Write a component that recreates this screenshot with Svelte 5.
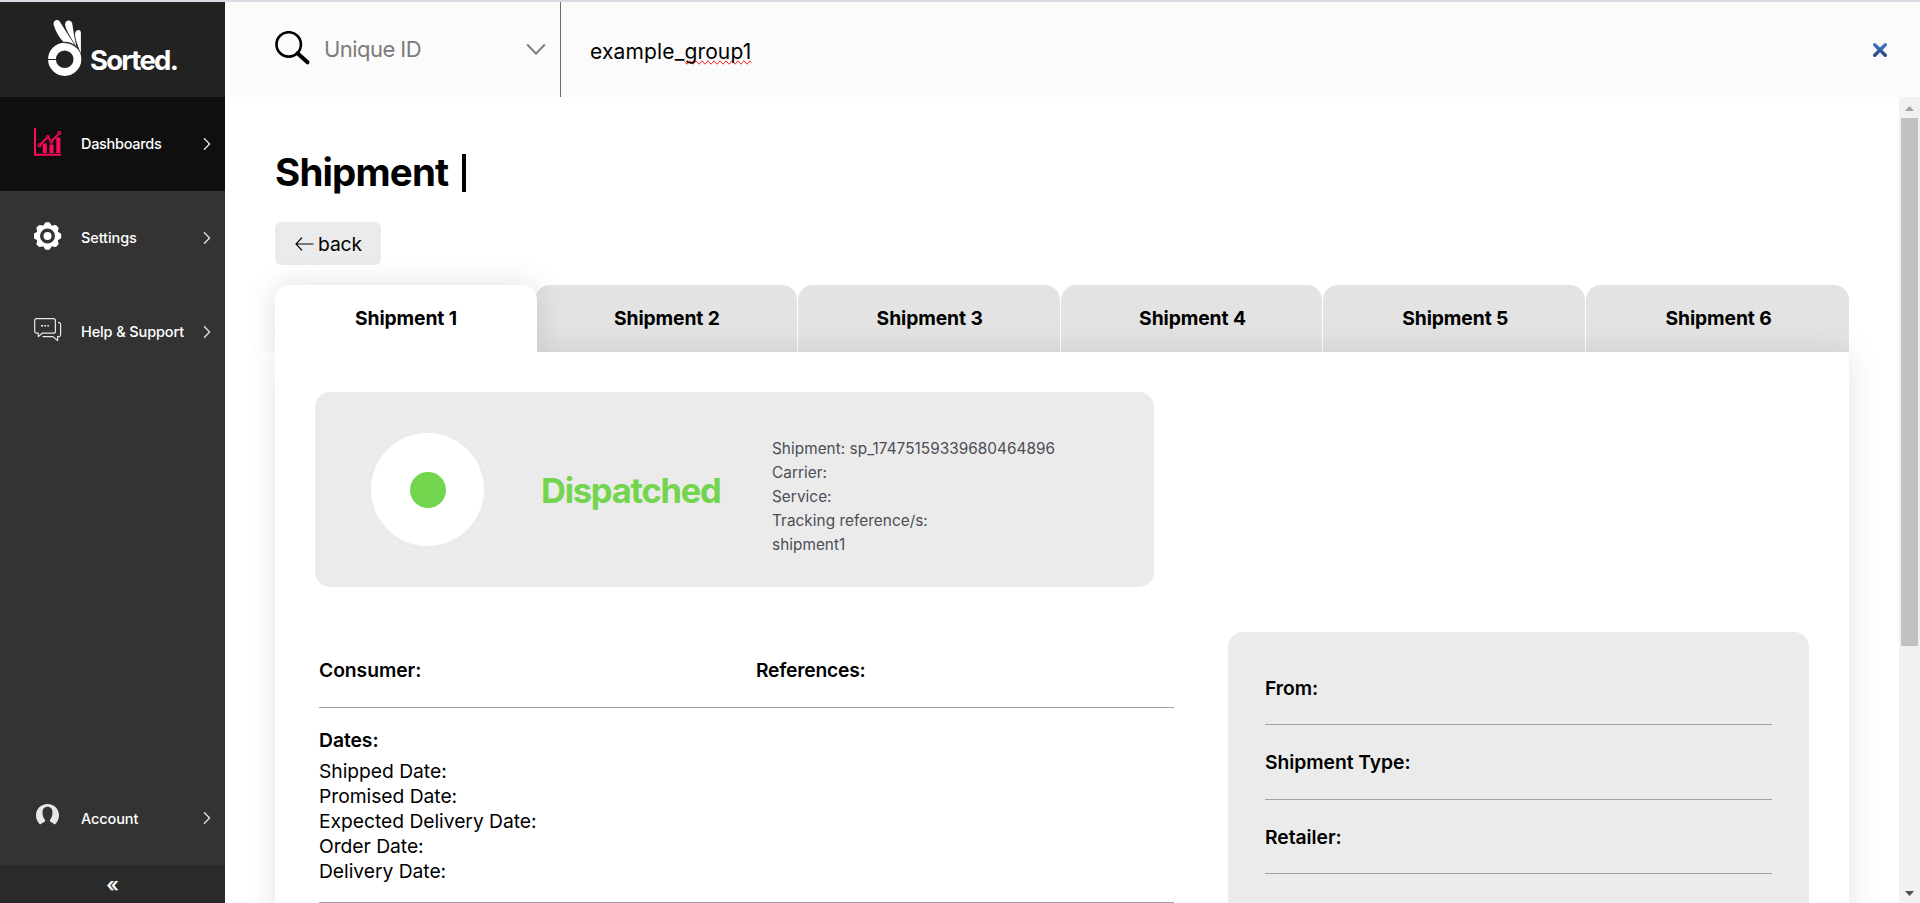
<script>
  const tabs = [1, 2, 3, 4, 5, 6];
  const info = ['Shipment: sp_17475159339680464896', 'Carrier:', 'Service:', 'Tracking reference/s:', 'shipment1'];
  const dates = ['Shipped Date:', 'Promised Date:', 'Expected Delivery Date:', 'Order Date:', 'Delivery Date:'];
  const details = ['From:', 'Shipment Type:', 'Retailer:'];
</script>

{#snippet chevron()}
  <svg class="chevron" width="8" height="14" viewBox="0 0 8 14"><path d="M1 1.2 6.6 7 1 12.8" fill="none" stroke="#e4e4e4" stroke-width="1.300" /></svg>
{/snippet}

<div class="app">
  <aside>
    <div class="logo">
      <svg width="36" height="60" viewBox="0 0 36 60">
        <g fill="#fff">
          <path d="M6.900 6.500C5 1.500 10.900-.700 13 2.900L27.500 25.800C24.500 23.600 20 22.300 16.300 22.800 12 18.500 9 13 6.900 6.500Z" />
          <path d="M18.200 6.500C17 1.200 23.700-.300 25.200 4.300L27.300 17.500 29.500 28C26 21.500 20 13.500 18.200 6.500Z" />
          <path d="M28 14.500C28.800 10.300 33.500 10 33.900 13.500V34.500C32 29 27.800 20.500 28 14.500Z" />
        </g>
        <circle cx="17.700" cy="40.300" r="12.700" fill="none" stroke="#fff" stroke-width="7.800" />
        <path d="M1 40.500H9" stroke="#222" stroke-width="1" />
        <path d="M17.500 23.800C22.500 24 26.500 25.500 30 29.500" stroke="#222" stroke-width=".7" fill="none" />
      </svg>
      <span>Sorted.</span>
    </div>

    <nav>
      <div class="item active">
        <svg class="icon" width="28" height="28" viewBox="0 0 28 28" stroke="#ff0a5c" fill="none">
          <path d="M1 0V26.800H27" stroke-width="2" />
          <path d="M10.800 15.500V25M17.500 16.500V25M24.300 9.500V25" stroke-width="4" />
          <path d="M5.800 17 13.800 9 17.300 13.500 25.300 5.300" stroke-width="1.800" />
          <g fill="#0f0f0f" stroke-width="1.300"><circle cx="5.500" cy="17.200" r="1.300" /><circle cx="13.700" cy="9" r="1.300" /><circle cx="17.300" cy="13.700" r="1.300" /><circle cx="25.300" cy="5" r="1.400" /></g>
        </svg>
        <span style:letter-spacing="-.3px">Dashboards</span>
        {@render chevron()}
      </div>
      <div class="item settings">
        <svg class="icon" width="28" height="28" viewBox="-13.500 -14 28 28">
          <g fill="#fff">
            {#each [0, 45, 90, 135, 180, 225, 270, 315] as a}
              <path d="M-5-9-2.400-13.300Q-2-13.700-1.500-13.700H1.500Q2-13.700 2.400-13.300L5-9Z" transform="rotate({a})" />
            {/each}
          </g>
          <circle r="9.100" fill="none" stroke="#fff" stroke-width="3.200" />
          <circle r="4" fill="#fff" />
        </svg>
        <span style:letter-spacing="-.1px">Settings</span>
        {@render chevron()}
      </div>
      <div class="item help">
        <svg class="icon" width="28" height="24" viewBox="0 0 28 24" fill="none" stroke="#e8e8e8" stroke-width="1.200" stroke-linejoin="round">
          <path d="M2.600.700H19.400Q21.400.700 21.400 2.700V13.200Q21.400 15.200 19.400 15.200H8.200L4.300 18.600V15.200H2.600Q.700 15.200.700 13.200V2.700Q.700.700 2.600.700Z" />
          <path d="M24 4.700H25Q26.600 4.700 26.600 6.500V16.800Q26.600 18.600 25 18.600H23.600V22.600L19 18.600H8.500" />
          <path d="M7 7.800H9M10.200 7.800H12M13.300 7.800H15" stroke-width="1.500" />
        </svg>
        <span style:letter-spacing="-.12px">Help &amp; Support</span>
        {@render chevron()}
      </div>
      <div class="item account">
        <svg class="icon" width="28" height="24" viewBox="0 0 28 24">
          <path fill="#e8e8e8" d="M13.500 1C6.800 1 2 6 2 12.300 2 16 3.500 19.200 6 21.400L10.500 18.800C11.300 18.200 11.300 17 10.500 16 9.200 14.500 8.500 12.500 8.500 9.500 8.500 6 10.300 3.800 13.500 3.800S18.500 6 18.500 9.500C18.500 12.500 17.800 14.500 16.500 16 15.700 17 15.700 18.200 16.500 18.800L21 21.400C23.500 19.200 25 16 25 12.300 25 6 20.200 1 13.500 1Z" />
        </svg>
        <span style:letter-spacing="-.12px">Account</span>
        {@render chevron()}
      </div>
    </nav>
    <div class="collapse">«</div>
  </aside>

  <div class="content">
    <header>
      <div class="select">
        <svg width="36" height="35" viewBox="0 0 36 35" fill="none" stroke="#000"><circle cx="13.700" cy="13.400" r="12.200" stroke-width="2.600" /><path d="M22.500 22.300 32.500 31.300" stroke-width="4" stroke-linecap="round" /></svg>
        <span>Unique ID</span>
        <svg class="down" width="20" height="13" viewBox="0 0 20 13"><path d="M1.200 1.500 10 10.700 18.800 1.500" fill="none" stroke="#7b7b7b" stroke-width="1.900" /></svg>
      </div>
      <div class="query">example_<span class="typo">group1</span></div>
      <svg class="close" width="16" height="16" viewBox="0 0 16 16">
        <defs><linearGradient id="blue" x1="0" y1="0" x2="0" y2="16" gradientUnits="userSpaceOnUse"><stop offset="0" stop-color="#4a7fd0" /><stop offset="1" stop-color="#1f3f78" /></linearGradient></defs>
        <path d="M2.700 2.700 13.300 13.300M13.300 2.700 2.700 13.300" stroke="url(#blue)" stroke-width="3.400" stroke-linecap="round" />
      </svg>
    </header>

    <div class="view">
      <main>
        <h1>Shipment <i></i></h1>
        <button>
          <svg width="19" height="14" viewBox="0 0 19 14"><path d="M7 .700 1 7 7 13.300M1 7H18.500" fill="none" stroke="#000" stroke-width="1.200" /></svg>
          back
        </button>

        <div class="tabs">
          {#each tabs as n}
            <div class="tab" class:current={n === 1}>Shipment {n}</div>
          {/each}
        </div>

        <section class="panel">
          <div class="status">
            <div class="ring"><div class="disc"><div class="dot"></div></div></div>
            <strong>Dispatched</strong>
            <div class="info">{#each info as line}<div>{line}</div>{/each}</div>
          </div>

          <div class="columns">
            <div class="left">
              <div class="pair"><h2>Consumer:</h2><h2>References:</h2></div>
              <div class="dates">
                <h2>Dates:</h2>
                {#each dates as d}<div>{d}</div>{/each}
              </div>
            </div>
            <div class="right">
              {#each details as d}<h2>{d}</h2>{/each}
            </div>
          </div>
        </section>
      </main>

      <div class="scroll">
        <svg width="9" height="5" viewBox="0 0 9 5"><path d="M4.500 0 9 5H0Z" fill="#a3a3a3" /></svg>
        <div class="thumb"></div>
        <svg width="9" height="5" viewBox="0 0 9 5"><path d="M4.500 5 9 0H0Z" fill="#505050" /></svg>
      </div>
    </div>
  </div>
</div>

<style>
  :global(body) { margin: 0; overflow: hidden; background: #fff; }
  .app { box-sizing: border-box; display: flex; width: 1920px; height: 903px; overflow: hidden; border-top: 2px solid #dcdbe3; font-family: Inter, 'Liberation Sans', sans-serif; font-size: 19.3px; color: #000; }
  svg { display: block; flex: none; }
  h1, h2 { margin: 0; }

  aside { flex: none; display: flex; flex-direction: column; width: 225px; background: #333; color: #fff; }
  .logo { box-sizing: border-box; display: flex; height: 95px; padding: 17px 0 0 47px; background: #222; }
  .logo span { margin: 24px 0 0 7px; line-height: 35px; font-size: 27.5px; font-weight: 700; letter-spacing: -1.750px; }
  nav { flex: 1; display: flex; flex-direction: column; }
  .item { box-sizing: border-box; display: flex; align-items: center; height: 94px; padding: 0 14px 0 34px; font-size: 14.5px; font-weight: 500; }
  .item span { flex: 1; margin: -1px 0 0 19px; }
  .item .icon { margin-top: -5px; }
  .active { background: #0f0f0f; }
  .account { margin-top: auto; }
  .account .icon { margin-top: -7px; }
  .account span { margin-top: 0; }
  .collapse { height: 36px; line-height: 41px; border-bottom: 2px solid #2b2426; background: #2a2a2a; text-align: center; font-size: 20px; font-weight: 600; }

  .content { flex: 1; display: flex; flex-direction: column; min-width: 0; }
  header { flex: none; display: flex; height: 95px; background: #fbfbfb; }
  .select { box-sizing: border-box; display: flex; align-items: flex-start; width: 336px; padding: 29px 14px 0 50px; border-right: 1px solid #6c6c6c; color: #7b7b7b; font-size: 22px; }
  .select span { flex: 1; margin-left: 13px; line-height: 36px; letter-spacing: -.55px; }
  .down { margin-top: 12px; }
  .query { flex: 1; padding: 31px 0 0 29px; line-height: 37px; font-size: 21px; letter-spacing: .150px; }
  .typo { text-decoration: spelling-error; }
  .close { margin: 40px 32px 0 0; }

  .view { flex: 1; display: flex; min-height: 0; background: #fff; }
  main { flex: none; width: 1624px; padding-left: 50px; overflow: hidden; }
  h1 { display: flex; align-items: center; height: 48px; margin-top: 51px; font-size: 38.5px; font-weight: 700; letter-spacing: -.83px; }
  h1 i { width: 4px; height: 38px; margin: 1px 0 0 14px; background: #000; }
  button { display: flex; align-items: center; gap: 4px; width: 106px; height: 43px; margin: 26px 0 20px; padding: 1px 0 0 20px; border: 0; border-radius: 6px; background: #ebebeb; font: inherit; letter-spacing: -.1px; color: #000; }

  .tabs { position: relative; display: grid; grid-template-columns: 260px repeat(5, 1fr); width: 1574px; height: 67px; }
  .tab { box-sizing: border-box; height: 67px; padding: 15px 0 0 2px; margin-right: 1px; border-radius: 15px 15px 0 0; background: #e3e3e3; text-align: center; line-height: 36px; font-weight: 700; letter-spacing: -.1px; }
  .tab:last-child { margin-right: 0; }
  .tab.current { position: relative; z-index: 2; margin-right: -2px; padding-left: 0; background: #fff; box-shadow: 0 0 30px rgba(0, 0, 0, .13); clip-path: inset(-40px -40px 0 -40px); }
  .panel { position: relative; z-index: 1; box-sizing: border-box; width: 1574px; height: 700px; padding: 40px; background: #fff; box-shadow: 0 0 30px rgba(0, 0, 0, .11); }

  .status { display: flex; align-items: center; width: 839px; height: 195px; border-radius: 15px; background: #ebebeb; }
  .ring { box-sizing: border-box; display: grid; place-items: center; width: 125px; height: 125px; margin-left: 50px; border: 1px solid #f0f0f0; border-radius: 50%; }
  .disc { display: grid; place-items: center; width: 113px; height: 113px; border-radius: 50%; background: #fff; }
  .dot { width: 36px; height: 36px; border-radius: 50%; background: #73d54d; }
  .status strong { width: 231px; margin: 1px 0 0 51px; font-size: 34.5px; letter-spacing: -1.250px; color: #73d54d; }
  .info { margin-top: 14px; font-size: 15.3px; line-height: 24px; letter-spacing: .06px; color: #4c4d55; }

  .columns { display: flex; justify-content: space-between; margin-top: 45px; }
  .left { width: 855px; margin-left: 4px; }
  .left h2, .right h2 { font-size: 19.3px; font-weight: 600; letter-spacing: -.04px; }
  .pair { box-sizing: border-box; display: grid; grid-template-columns: 437px 1fr; height: 76px; padding-top: 26px; border-bottom: 1px solid #a2a2a5; line-height: 25px; }
  .pair h2:last-child { letter-spacing: -.22px; }
  .dates { padding-top: 20px; border-bottom: 1px solid #a2a2a5; height: 174px; line-height: 25px; letter-spacing: -.04px; }
  .dates h2 { margin-bottom: 6px; line-height: 25px; }
  .right { box-sizing: border-box; width: 581px; height: 400px; padding: 37px 37px 0; border-radius: 15px; background: #ebebeb; }
  .right h2 { box-sizing: border-box; height: 74.500px; padding-top: 25px; border-bottom: 1px solid #a2a2a5; line-height: 25px; }
  .right h2:first-child { height: 56px; padding-top: 7px; }

  .scroll { display: flex; flex-direction: column; align-items: center; box-sizing: border-box; width: 21px; height: 806px; padding: 9px 0 7px; background: #f1f1f1; }
  .thumb { width: 17px; height: 528px; margin: 7px 0 auto; background: #c1c1c1; }
</style>
